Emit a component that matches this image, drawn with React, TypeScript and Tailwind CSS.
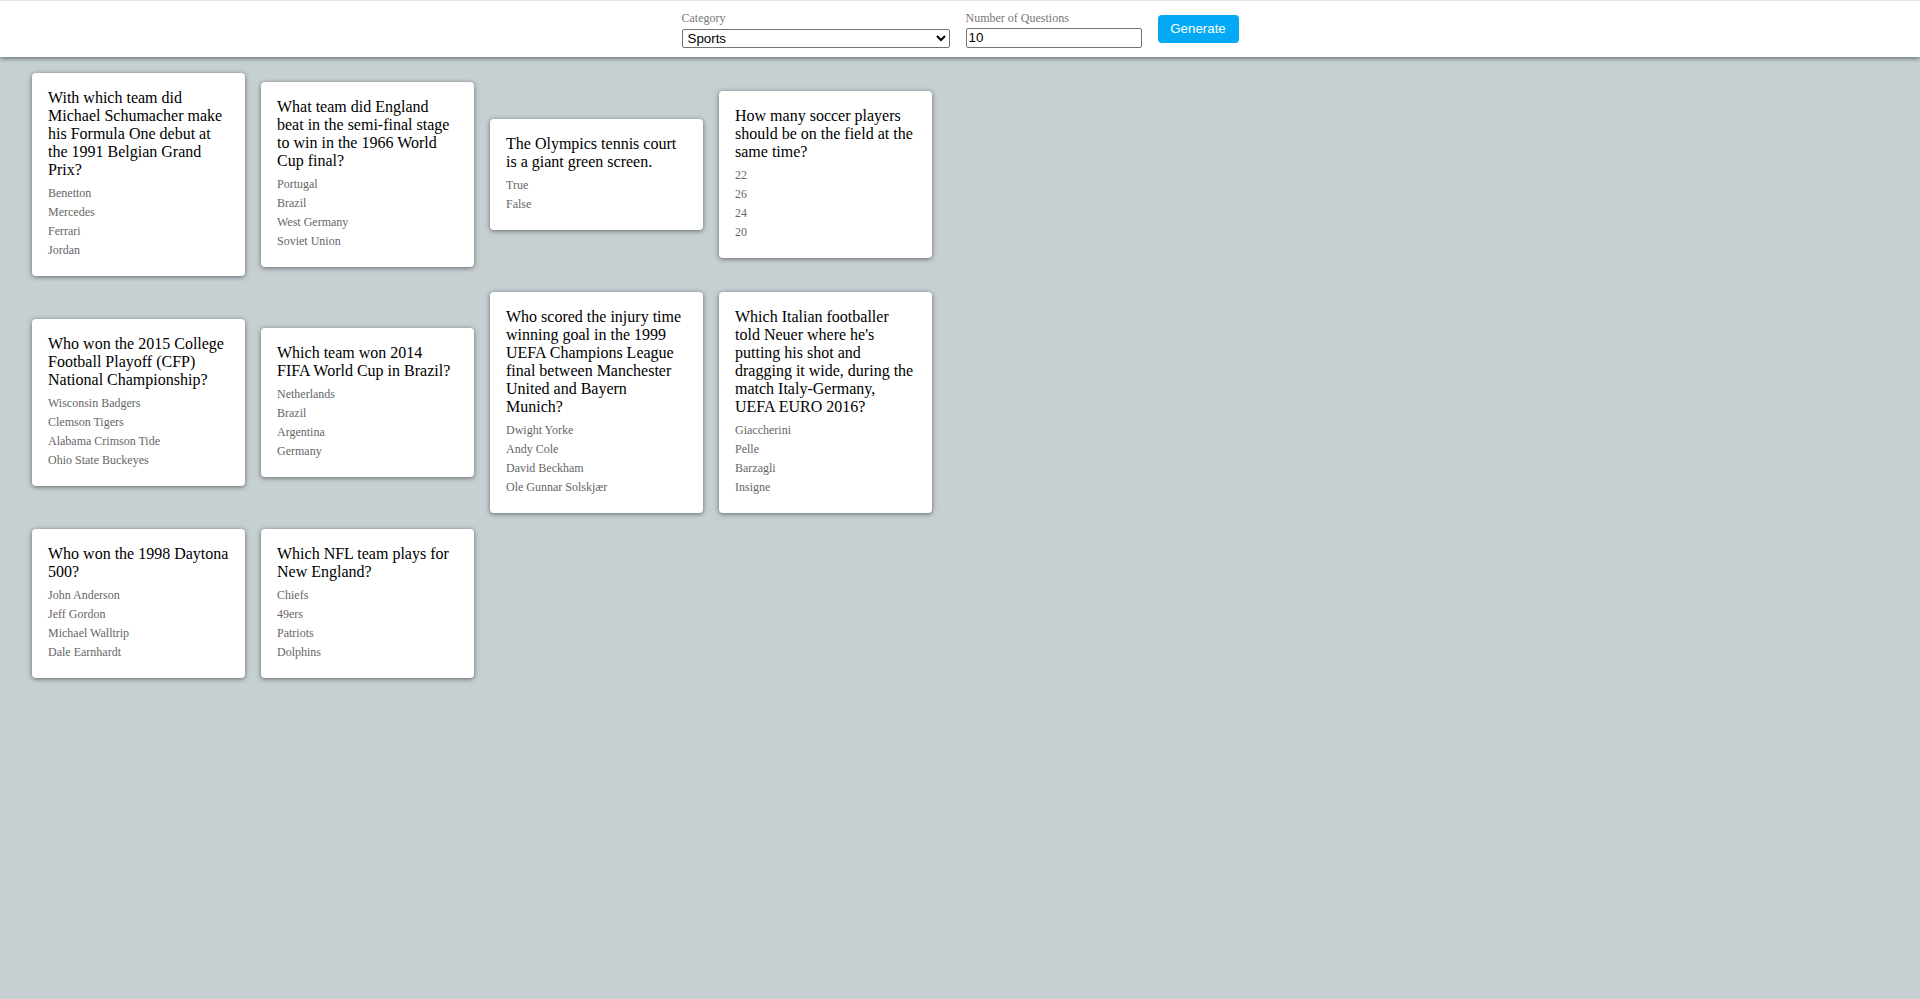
import { useState } from "react"

type Question = {
  question: string
  answers: string[]
}

const questions: Question[] = [
  {
    question: "With which team did Michael Schumacher make his Formula One debut at the 1991 Belgian Grand Prix?",
    answers: ["Benetton", "Mercedes", "Ferrari", "Jordan"],
  },
  {
    question: "What team did England beat in the semi-final stage to win in the 1966 World Cup final?",
    answers: ["Portugal", "Brazil", "West Germany", "Soviet Union"],
  },
  {
    question: "The Olympics tennis court is a giant green screen.",
    answers: ["True", "False"],
  },
  {
    question: "How many soccer players should be on the field at the same time?",
    answers: ["22", "26", "24", "20"],
  },
  {
    question: "Who won the 2015 College Football Playoff (CFP) National Championship?",
    answers: ["Wisconsin Badgers", "Clemson Tigers", "Alabama Crimson Tide", "Ohio State Buckeyes"],
  },
  {
    question: "Which team won 2014 FIFA World Cup in Brazil?",
    answers: ["Netherlands", "Brazil", "Argentina", "Germany"],
  },
  {
    question:
      "Who scored the injury time winning goal in the 1999 UEFA Champions League final between Manchester United and Bayern Munich?",
    answers: ["Dwight Yorke", "Andy Cole", "David Beckham", "Ole Gunnar Solskjær"],
  },
  {
    question:
      "Which Italian footballer told Neuer where he's putting his shot and dragging it wide, during the match Italy-Germany, UEFA EURO 2016?",
    answers: ["Giaccherini", "Pelle", "Barzagli", "Insigne"],
  },
  {
    question: "Who won the 1998 Daytona 500?",
    answers: ["John Anderson", "Jeff Gordon", "Michael Walltrip", "Dale Earnhardt"],
  },
  {
    question: "Which NFL team plays for New England?",
    answers: ["Chiefs", "49ers", "Patriots", "Dolphins"],
  },
]

function Card({ q }: { q: Question }) {
  return (
    <div className="w-[213px] bg-white rounded-[4px] p-4 shadow-[0_1px_5px_rgba(0,0,0,0.5)]">
      <div className="text-[16px] leading-[18px] text-black mb-[5px]">{q.question}</div>
      {q.answers.map((a) => (
        <div key={a} className="text-[12px] leading-[19px] text-[#666]">
          {a}
        </div>
      ))}
    </div>
  )
}

export default function App() {
  const [category, setCategory] = useState("sports")
  const [amount, setAmount] = useState("10")

  return (
    <div className="min-h-screen bg-[#c6cfd2] font-['Liberation_Serif',serif]">
      {/* header with the form */}
      <div className="h-[57px] bg-white border-t border-[#e2e2e2] shadow-[0_2px_4px_rgba(0,0,0,0.4)] flex items-center justify-center gap-4 relative z-10">
        <div className="flex flex-col">
          <label className="text-[12px] leading-[14px] text-[#777] mb-[4px]">Category</label>
          <select
            value={category}
            onChange={(e) => setCategory(e.target.value)}
            className="w-[268px] h-[19px] border border-[#767676] rounded-[2px] bg-white text-black text-[13.33px] font-['Liberation_Sans',Arial,sans-serif] pl-[1px]"
          >
            <option value="general">General Knowledge</option>
            <option value="sports">Sports</option>
            <option value="history">History</option>
          </select>
        </div>
        <div className="flex flex-col">
          <label className="text-[12px] leading-[14px] text-[#777] mb-[3px]">Number of Questions</label>
          <input
            type="number"
            value={amount}
            onChange={(e) => setAmount(e.target.value)}
            className="w-[176px] h-[20px] border border-[#767676] rounded-[2px] bg-white text-black text-[13.33px] px-[2px] font-['Liberation_Sans',Arial,sans-serif] [appearance:textfield] [&::-webkit-inner-spin-button]:appearance-none"
          />
        </div>
        <button className="w-[81px] h-[28px] bg-[#03a9f4] text-white rounded-[4px] text-[13.33px] font-['Liberation_Sans',Arial,sans-serif]">
          Generate
        </button>
      </div>

      {/* question cards */}
      <div className="grid grid-cols-[repeat(4,213px)] gap-4 items-center pt-4 pl-8">
        {questions.map((q, i) => (
          <Card key={i} q={q} />
        ))}
      </div>
    </div>
  )
}
